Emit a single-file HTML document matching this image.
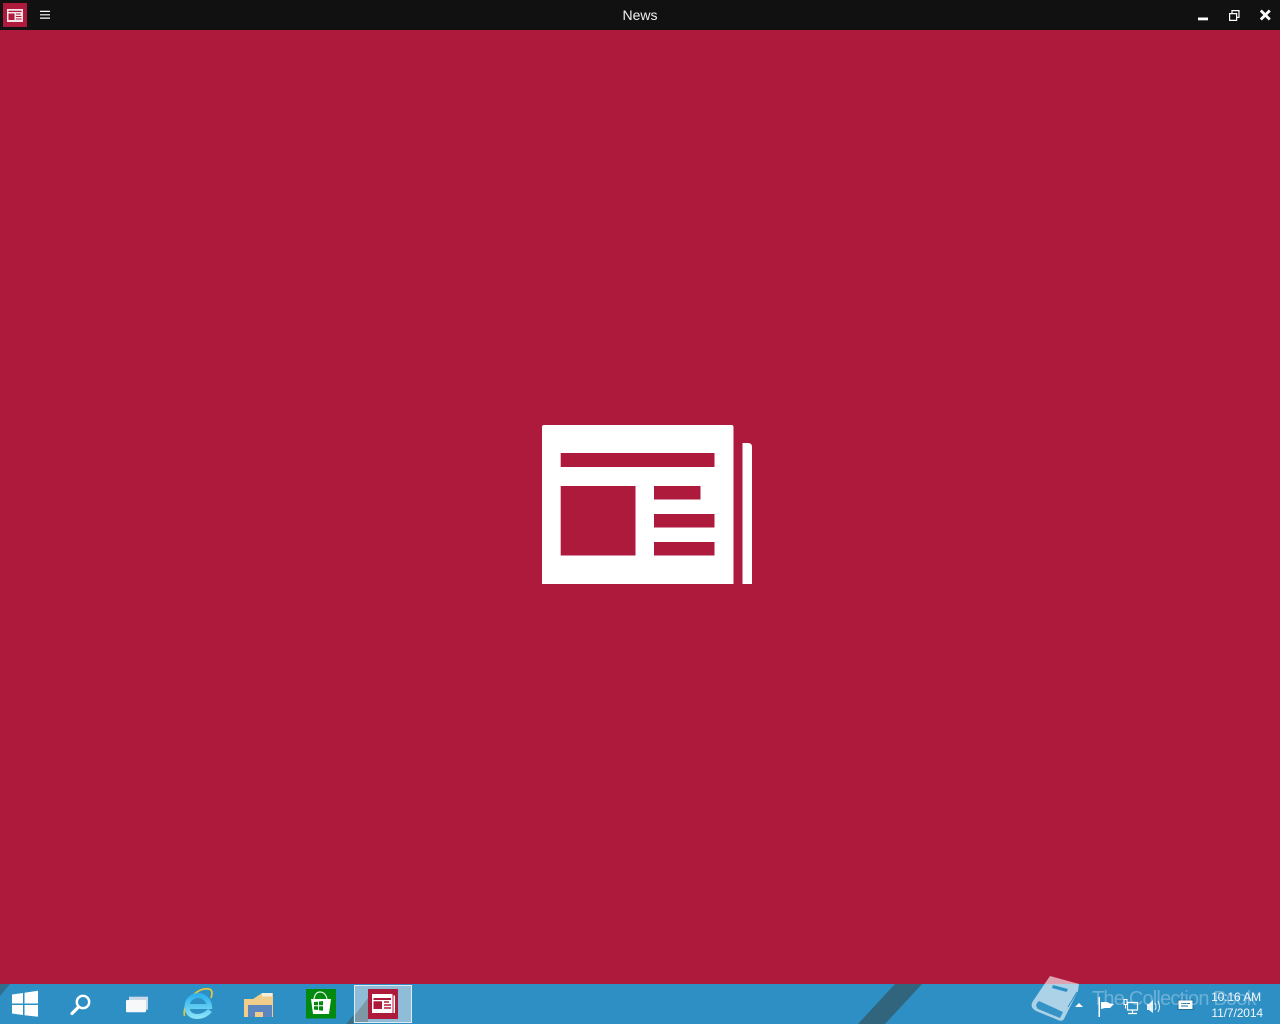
<!DOCTYPE html>
<html><head><meta charset="utf-8"><title>News</title>
<style>
html,body{margin:0;padding:0;width:1280px;height:1024px;overflow:hidden;background:#ad1a3c;font-family:"Liberation Sans",sans-serif}
.a{position:absolute}
</style></head>
<body>
<div class="a" style="left:0;top:0;width:1280px;height:30px;background:#111"></div>
<div class="a" style="left:0;top:30px;width:1280px;height:954px;background:#ad1a3c"></div>
<div class="a" style="left:0;top:7px;width:1280px;text-align:center;color:#f2f2f2;font-size:14px;line-height:16px">News</div>
<svg class="a" style="left:0;top:0" width="1280" height="30" viewBox="0 0 1280 30">
<rect x="3" y="3" width="24" height="24" fill="#ad1a3c"/>
<path fill="#f7e4e9" fill-rule="evenodd" d="M7 9h16v13H7zM8.500 10.800v1.200h13v-1.200zM8.500 13.500v6.500h6v-6.500zM16 13.500v1h4.500v-1zM16 16v1h5.500v-1zM16 18.500v1h5.500v-1z"/>
<path fill="#fff" d="M40 10.800h10v1.200H40zM40 14.200h10v1.200H40zM40 17.500h10v1.200H40z"/>
<rect x="1198" y="17.500" width="10" height="2.800" fill="#fff"/>
<path fill="none" stroke="#fff" stroke-width="1.200" d="M1229.600 13.600h7v6.800h-7zM1232 13v-2.400h7v6.800h-2"/>
<path fill="none" stroke="#fff" stroke-width="2.800" d="M1260.800 10.500l9 9M1269.800 10.500l-9 9"/>
</svg>
<svg class="a" style="left:0;top:0" width="1280" height="1024" viewBox="0 0 1280 1024">
<path fill="#fff" fill-rule="evenodd" d="M544 425H731.500Q733.500 425 733.500 427V584H542V427Q542 425 544 425ZM560.700 453V467H714.500V453ZM560.700 486V555.500H635.500V486ZM654 486V499.500H700.500V486ZM654 514V527.500H714.500V514ZM654 542V555.500H714.500V542Z"/>
<path fill="#fff" d="M742.500 443H748Q752 443 752 447V584H742.500Z"/>
</svg>
<div class="a" style="left:0;top:984px;width:1280px;height:40px;background:#2e8fc4"></div>
<svg class="a" style="left:0;top:984px;overflow:visible" width="1280" height="40" viewBox="0 0 1280 40">
<defs>
<linearGradient id="ie" x1="0" y1="0" x2="0" y2="1"><stop offset="0" stop-color="#2fb2ec"/><stop offset="1" stop-color="#86e0f6"/></linearGradient>
</defs>
<path fill="#2f6f8c" d="M0 0H10L0 12Z"/>
<path fill="#30657d" d="M895 0H922L885 40H858Z"/>
<!-- start -->
<path fill="#fff" d="M12 10.500L23 9V19.500H12ZM24.500 8.800L38 6.800V19.500H24.500ZM12 21H23V31L12 29.500ZM24.500 21H38V32.700L24.500 31.200Z"/>
<!-- search -->
<circle cx="83" cy="18" r="6.200" fill="none" stroke="#fff" stroke-width="2.400"/>
<path stroke="#fff" stroke-width="3.200" stroke-linecap="round" d="M78.500 23L72 29.500"/>
<!-- task view -->
<rect x="129" y="12.700" width="19" height="13" fill="#c9d9e8"/>
<rect x="126" y="16" width="20" height="12.300" rx="1" fill="#f6f8fa"/>
<!-- IE -->
<path fill="none" stroke="#e3c544" stroke-width="1.700" d="M184.500 32C183 26 187 15 197 8C203 4 212 3 212 9C212 11 211.500 12.500 211 14"/>
<path fill="none" stroke="url(#ie)" stroke-width="5" d="M210 26.500C206 31 201 32.500 197 32.500C191 32.500 187 28.500 187 23C187 16 192 11.500 198 11.500C204 11.500 209 16 209.500 22.500H189"/>
<!-- explorer -->
<path fill="#f1cd8b" d="M244 15H253L262 9H273V33H244Z"/>
<rect x="262" y="9" width="10" height="3.500" fill="#f5efe0"/>
<path fill="#5b86c0" d="M248 21H272V33H248Z"/>
<path fill="#f1cd8b" d="M255 28H263V33H255Z"/>
<!-- store -->
<rect x="306" y="5" width="30" height="29.500" fill="#028a0f"/>
<path fill="none" stroke="#e7f4e7" stroke-width="1.200" d="M314 15C315 9 318 8 320 8C323 8 326 10 327 15"/>
<path fill="#fff" fill-rule="evenodd" d="M311 15H331L329 30H313ZM314 18V21.300H318V17.700ZM319 17.500V21.300H323V17ZM314 22.300V25.600L318 26V22.300ZM319 22.300V26.200L323 26.700V22.300Z"/>
<!-- active tile -->
<rect x="354" y="1" width="58" height="38" fill="#8fbdd8"/>
<path fill="#7e98a6" d="M368 14V39H354V32Z"/>
<path fill="#3a6d86" d="M353.500 31V40H346Z"/>
<rect x="354.500" y="1.500" width="57" height="37" fill="none" stroke="#dcebf4"/>
<rect x="368" y="5" width="30" height="30" fill="#ad1a3c"/>
<path fill="#fff" fill-rule="evenodd" d="M372 10H392.500V29H372ZM373.500 14V16H391V14ZM373.500 17.300V25H382V17.300ZM384 17.300V18.700H389V17.300ZM384 20.300V21.700H391V20.300ZM384 23.300V24.700H391V23.300Z"/>
<path fill="#fff" d="M393.500 11.500H395V29H393.500Z"/>
<!-- watermark book -->
<path fill="#fff" opacity=".6" d="M1050 -8L1079 0L1078 7L1064 35Q1062 38 1058 36L1036 27Q1029 23 1033 17Z"/>
<path fill="#2e8fc4" d="M1053 1L1068 5L1066.500 8L1052 4Z"/>
<path fill="#2e8fc4" opacity=".95" d="M1039 17L1063 28L1060 34L1038 25Q1034 21 1039 17Z"/>
<path fill="none" stroke="#2e8fc4" stroke-width="1" d="M1077 8L1068 23"/>
<!-- tray -->
<path fill="#fff" d="M1075 23L1079 19L1083 23Z"/>
<path fill="#fff" d="M1098.500 13H1100V33H1098.500ZM1101 18H1107L1110 19.500L1114 20L1110 24H1105L1101 25Z"/>
<path fill="none" stroke="#fff" stroke-width="1.200" d="M1127.500 18.500h10v7.500h-10zM1132.500 26v3M1128 29.500h9"/>
<path fill="none" stroke="#fff" stroke-width="1.100" d="M1124 15.500h3v5h-3zM1125.500 20.500v4"/>
<path fill="#e8f2f8" d="M1147 20H1149L1153 16V29L1149 26H1147Z"/>
<path fill="none" stroke="#dbe9f2" stroke-width="1.100" d="M1155 19Q1157 22.500 1155 26M1158 17Q1161 22.500 1158 28"/>
<rect x="1177.500" y="15.500" width="16" height="10.500" fill="#1f6f9c"/>
<path fill="#fff" fill-rule="evenodd" d="M1178.500 16.500H1192.500V25H1178.500ZM1181 19V20H1190V19ZM1181 21.500V22.500H1188V21.500Z"/>
</svg>
<div class="a" style="left:1092px;top:987px;font-size:20px;line-height:24px;color:rgba(255,255,255,.3);white-space:nowrap;letter-spacing:-.8px">The Collection Book</div>
<div class="a" style="left:1190px;top:989px;width:73px;text-align:right;font-size:12px;line-height:16px;color:#f4f8fb;white-space:nowrap;letter-spacing:-.1px"><span style="margin-right:2px">10:16 AM</span><br>11/7/2014</div>
</body></html>
